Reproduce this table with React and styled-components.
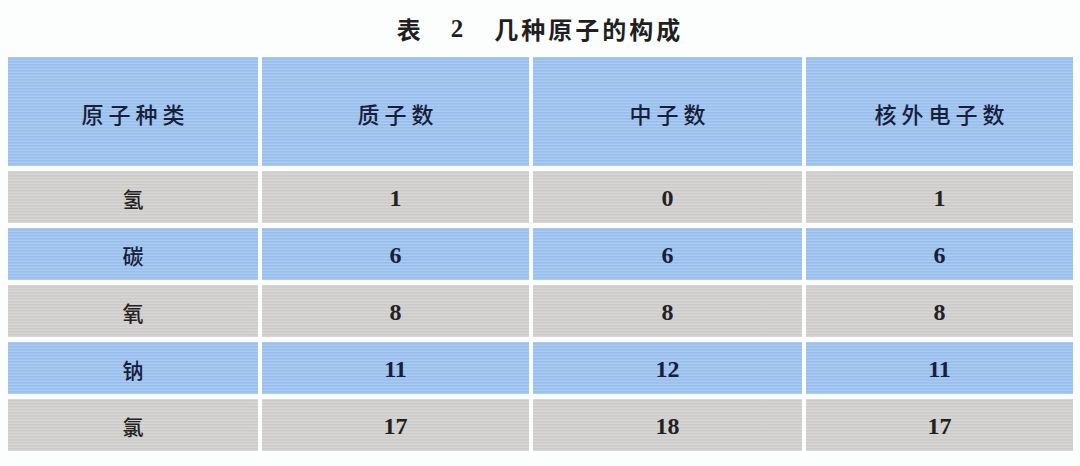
import React from "react";
import styled, { createGlobalStyle } from "styled-components";

const Global = createGlobalStyle`
  html, body { margin: 0; padding: 0; background: #fcfdfd; }
  body { font-family: "Noto Sans CJK SC", "Noto Sans", sans-serif; }
`;

const Page = styled.div`
  width: 1080px;
  height: 466px;
  box-sizing: border-box;
  padding: 0 8px;
  background: #fcfdfd;
`;

const Title = styled.h1`
  margin: 0;
  height: 57px;
  display: flex;
  align-items: center;
  justify-content: center;
  font-family: "Noto Sans CJK SC", sans-serif;
  font-weight: 700;
  font-size: 24px;
  color: #1f1f1f;
`;

const TitlePart = styled.span`
  margin-right: ${(p) => p.$gap || 0}px;
  letter-spacing: ${(p) => p.$ls || 0}px;
  font-family: ${(p) => (p.$num ? '"Liberation Serif", serif' : '"Noto Sans CJK SC", sans-serif')};
  font-size: ${(p) => (p.$num ? 25 : 24)}px;
`;

const Grid = styled.div`
  display: grid;
  grid-template-columns: 250px 267px 269px 267px;
  grid-template-rows: 109px repeat(5, 52px);
  column-gap: 4px;
  row-gap: 5px;
`;

const stripes = `repeating-linear-gradient(180deg, rgba(255,255,255,0.13) 0px, rgba(255,255,255,0.13) 1px, rgba(0,0,0,0.025) 1px, rgba(0,0,0,0.025) 2px, transparent 2px, transparent 3px)`;

const Cell = styled.div`
  display: flex;
  align-items: center;
  justify-content: center;
  background: ${stripes}, ${(p) => (p.$tone === "blue" ? "#9ec3f0" : "#d1d0ce")};
  color: ${(p) => (p.$tone === "blue" ? "#16203a" : "#222222")};
  font-family: ${(p) =>
    p.$num ? '"Liberation Serif", "Noto Sans CJK SC", serif' : '"Noto Sans CJK SC", sans-serif'};
  font-size: ${(p) => (p.$num ? 24 : p.$head ? 22 : 21)}px;
  font-weight: ${(p) => (p.$num ? 700 : 500)};
  letter-spacing: ${(p) => (p.$head ? 5 : 0)}px;
  padding-top: ${(p) => (p.$head ? 3 : 2)}px;
  padding-left: ${(p) => (p.$head ? 5 : 0)}px;
  box-sizing: border-box;
`;

const headers = ["原子种类", "质子数", "中子数", "核外电子数"];
const rows = [
  ["氢", "1", "0", "1"],
  ["碳", "6", "6", "6"],
  ["氧", "8", "8", "8"],
  ["钠", "11", "12", "11"],
  ["氯", "17", "18", "17"],
];

export default function App() {
  return (
    <Page>
      <Global />
      <Title>
        <TitlePart $gap={30}>表</TitlePart>
        <TitlePart $gap={31} $num>2</TitlePart>
        <TitlePart $ls={3}>几种原子的构成</TitlePart>
      </Title>
      <Grid>
        {headers.map((h) => (
          <Cell key={h} $tone="blue" $head>
            {h}
          </Cell>
        ))}
        {rows.map((r, i) =>
          r.map((v, j) => (
            <Cell key={`${i}-${j}`} $tone={i % 2 === 0 ? "grey" : "blue"} $num={j > 0}>
              {v}
            </Cell>
          ))
        )}
      </Grid>
    </Page>
  );
}
